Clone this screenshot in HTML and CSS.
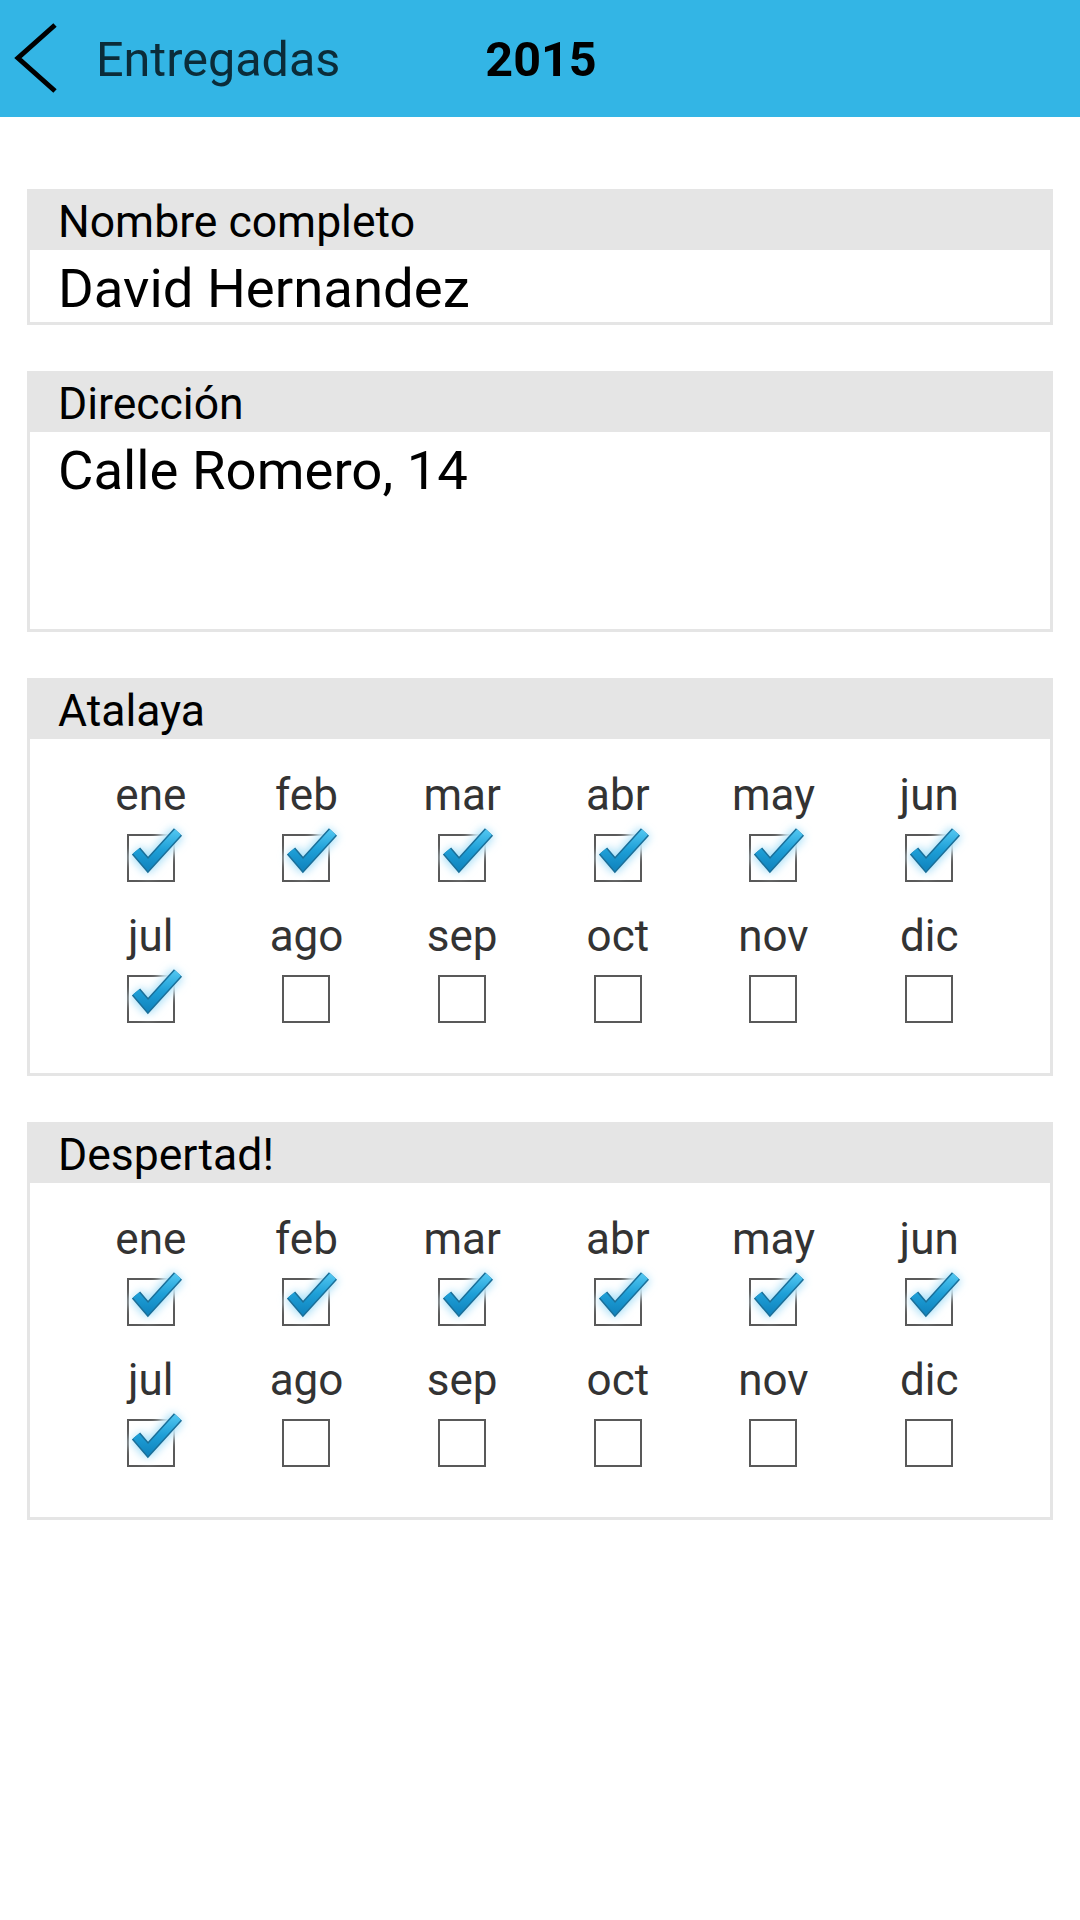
FILE: index.html
```html
<!DOCTYPE html>
<html lang="es">
<head>
<meta charset="utf-8">
<title>Entregadas 2015</title>
<link rel="stylesheet" href="styles.css">
</head>
<body>
<svg class="defs" width="0" height="0" aria-hidden="true">
  <defs>
    <linearGradient id="checkGrad" gradientUnits="userSpaceOnUse" x1="0" y1="-2" x2="0" y2="34">
      <stop offset="0" stop-color="#4cc2ee"/>
      <stop offset="0.5" stop-color="#1e9fd7"/>
      <stop offset="1" stop-color="#1186c0"/>
    </linearGradient>
    <filter id="glow" x="-50%" y="-50%" width="200%" height="200%">
      <feGaussianBlur stdDeviation="4"/>
    </filter>
    <symbol id="check" viewBox="-10 -14 74 66">
      <path d="M9 17 L21 31 L51 -2" fill="none" stroke="#ffffff" stroke-width="20" stroke-linejoin="round" filter="url(#glow)"/>
      <path d="M9 17 L21 31 L51 -2" fill="none" stroke="#a9e0f8" stroke-width="15" stroke-linejoin="round" filter="url(#glow)"/>
      <path d="M9 17 L21 31 L51 -2" fill="none" stroke="#1a6f99" stroke-width="11" stroke-linejoin="miter"/>
      <path d="M9 17 L21 31 L51 -2" fill="none" stroke="url(#checkGrad)" stroke-width="8" stroke-linejoin="miter"/>
    </symbol>
  </defs>
</svg>

<header class="appbar">
  <svg class="back" width="64" height="117" viewBox="0 0 64 117" aria-hidden="true">
    <path d="M55 25 L18 58 L55 91" fill="none" stroke="#000" stroke-width="5"/>
  </svg>
  <span class="appbar-title">Entregadas</span>
  <span class="appbar-year">2015</span>
</header>

<main class="content">
  <section class="field">
    <div class="field-label">Nombre completo</div>
    <div class="field-value">David Hernandez</div>
  </section>

  <section class="field">
    <div class="field-label">Dirección</div>
    <div class="field-value field-value--multi">Calle Romero, 14</div>
  </section>

  <section class="field">
    <div class="field-label">Atalaya</div>
    <div class="months">
      <div class="month"><span class="month-name">ene</span><span class="cb"><svg class="tick" width="74" height="66"><use href="#check"/></svg></span></div>
      <div class="month"><span class="month-name">feb</span><span class="cb"><svg class="tick" width="74" height="66"><use href="#check"/></svg></span></div>
      <div class="month"><span class="month-name">mar</span><span class="cb"><svg class="tick" width="74" height="66"><use href="#check"/></svg></span></div>
      <div class="month"><span class="month-name">abr</span><span class="cb"><svg class="tick" width="74" height="66"><use href="#check"/></svg></span></div>
      <div class="month"><span class="month-name">may</span><span class="cb"><svg class="tick" width="74" height="66"><use href="#check"/></svg></span></div>
      <div class="month"><span class="month-name">jun</span><span class="cb"><svg class="tick" width="74" height="66"><use href="#check"/></svg></span></div>
      <div class="month"><span class="month-name">jul</span><span class="cb"><svg class="tick" width="74" height="66"><use href="#check"/></svg></span></div>
      <div class="month"><span class="month-name">ago</span><span class="cb"></span></div>
      <div class="month"><span class="month-name">sep</span><span class="cb"></span></div>
      <div class="month"><span class="month-name">oct</span><span class="cb"></span></div>
      <div class="month"><span class="month-name">nov</span><span class="cb"></span></div>
      <div class="month"><span class="month-name">dic</span><span class="cb"></span></div>
    </div>
  </section>

  <section class="field">
    <div class="field-label">Despertad!</div>
    <div class="months">
      <div class="month"><span class="month-name">ene</span><span class="cb"><svg class="tick" width="74" height="66"><use href="#check"/></svg></span></div>
      <div class="month"><span class="month-name">feb</span><span class="cb"><svg class="tick" width="74" height="66"><use href="#check"/></svg></span></div>
      <div class="month"><span class="month-name">mar</span><span class="cb"><svg class="tick" width="74" height="66"><use href="#check"/></svg></span></div>
      <div class="month"><span class="month-name">abr</span><span class="cb"><svg class="tick" width="74" height="66"><use href="#check"/></svg></span></div>
      <div class="month"><span class="month-name">may</span><span class="cb"><svg class="tick" width="74" height="66"><use href="#check"/></svg></span></div>
      <div class="month"><span class="month-name">jun</span><span class="cb"><svg class="tick" width="74" height="66"><use href="#check"/></svg></span></div>
      <div class="month"><span class="month-name">jul</span><span class="cb"><svg class="tick" width="74" height="66"><use href="#check"/></svg></span></div>
      <div class="month"><span class="month-name">ago</span><span class="cb"></span></div>
      <div class="month"><span class="month-name">sep</span><span class="cb"></span></div>
      <div class="month"><span class="month-name">oct</span><span class="cb"></span></div>
      <div class="month"><span class="month-name">nov</span><span class="cb"></span></div>
      <div class="month"><span class="month-name">dic</span><span class="cb"></span></div>
    </div>
  </section>
</main>
</body>
</html>
```

FILE: styles.css
```css
html, body {
  margin: 0;
  padding: 0;
  background: #ffffff;
}

body {
  font-family: Roboto, "Noto Sans", "DejaVu Sans", sans-serif;
  color: #000;
}

.defs {
  display: block;
  width: 0;
  height: 0;
  overflow: hidden;
}

.appbar {
  height: 117px;
  background: #33b5e5;
  display: flex;
  align-items: center;
  box-sizing: border-box;
  padding-top: 4px;
}

.back {
  display: block;
  flex: none;
  margin-top: -4px;
}

.appbar-title {
  margin-left: 32px;
  font-size: 48.5px;
  color: #0b2c39;
  line-height: 1;
}

.appbar-year {
  margin-left: 145px;
  font-size: 48.5px;
  font-weight: 700;
  color: #000;
  line-height: 1;
}

.content {
  display: flex;
  flex-direction: column;
  gap: 46px;
  padding: 72px 27px 0;
}

.field {
  border: 3px solid #e5e5e5;
  background: #fff;
}

.field-label {
  background: #e5e5e5;
  height: 58px;
  box-sizing: border-box;
  padding: 4px 28px 2px;
  font-size: 44.5px;
  line-height: 52px;
  color: #000;
}

.field-value {
  padding: 6px 28px 2px;
  font-size: 54.5px;
  line-height: 64px;
  color: #000;
}

.field-value--multi {
  min-height: 189px;
}

.months {
  display: grid;
  grid-template-columns: repeat(6, 1fr);
  row-gap: 28px;
  padding: 30px 43px 50px;
}

.month {
  display: flex;
  flex-direction: column;
  align-items: center;
  gap: 13px;
}

.month-name {
  font-size: 44px;
  line-height: 52px;
  color: #333333;
}

.cb {
  position: relative;
  display: block;
  width: 48px;
  height: 48px;
  box-sizing: border-box;
  border: 2px solid #595959;
}

.tick {
  position: absolute;
  left: -12px;
  top: -16px;
  display: block;
  overflow: visible;
}
```
